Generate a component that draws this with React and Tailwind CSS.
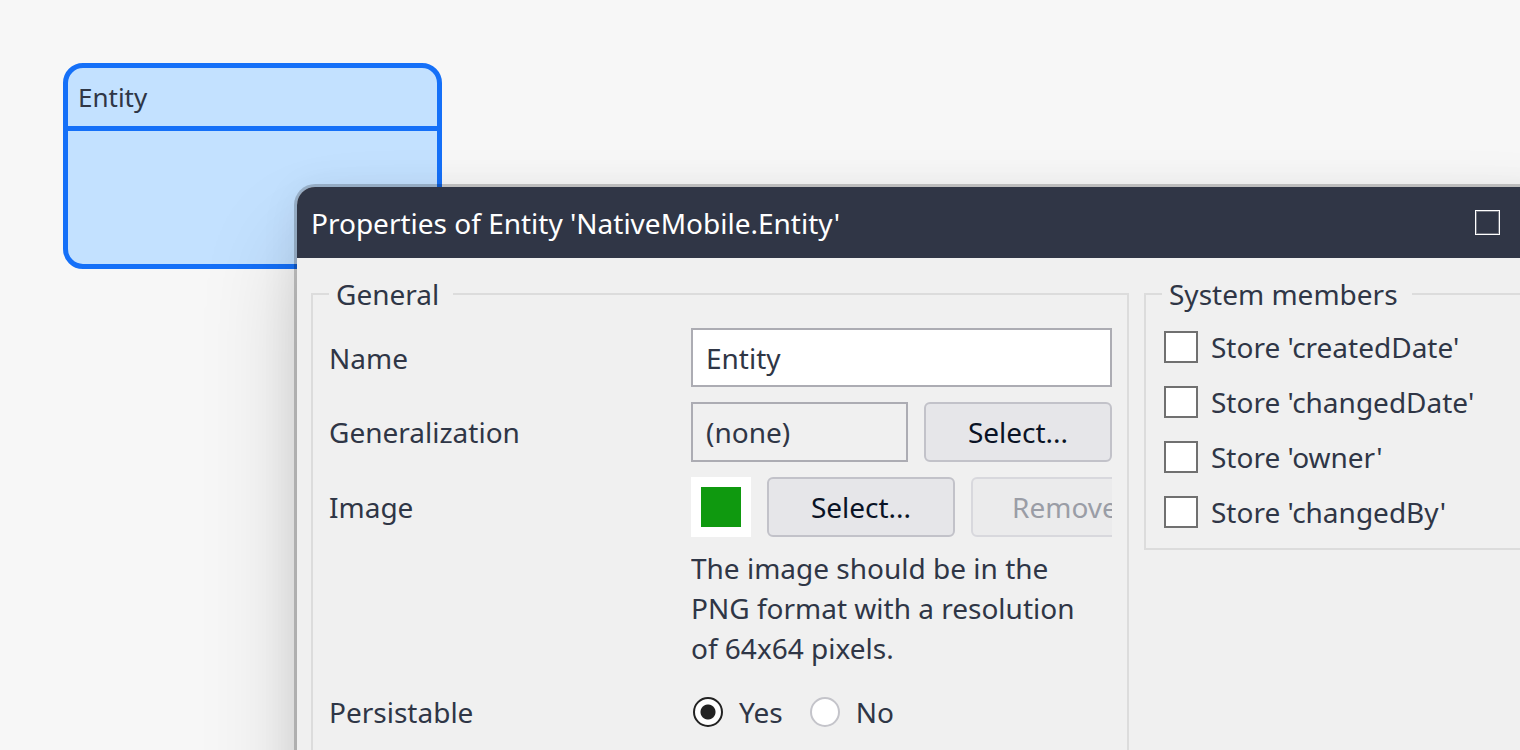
import { useState } from "react";

const buttonClass =
  "h-full w-[188px] shrink-0 rounded-[6px] border-2 border-[#c2c2c9] bg-[#e6e6e9] text-center text-[#0a1325] disabled:border-[#d8d8dd] disabled:bg-[#ebebec] disabled:text-[#9a9da6]";

const fieldClass =
  "h-full w-full min-w-0 flex-1 border-2 border-[#acacb3] px-[13px] text-[#2f3646] outline-none";

function Group({ title, className, children }) {
  return (
    <fieldset className={`min-w-0 border-2 border-[#dcdcdc] pr-[15px] pl-4 ${className}`}>
      <legend className="pr-[14px] pl-[7px]">{title}</legend>
      {children}
    </fieldset>
  );
}

function Row({ label, htmlFor, className, children }) {
  return (
    <div className={`grid grid-cols-[362px_1fr] ${className}`}>
      {htmlFor ? (
        <label htmlFor={htmlFor} className="flex h-full items-center">
          {label}
        </label>
      ) : (
        <span className="flex h-full items-center">{label}</span>
      )}
      <div className="flex min-w-0 items-center overflow-hidden">{children}</div>
    </div>
  );
}

function Radio({ label, checked, onChange }) {
  return (
    <label className="flex items-center gap-4">
      <input
        type="radio"
        name="persistable"
        checked={checked}
        onChange={onChange}
        className="size-[30px] appearance-none rounded-full border-2 border-[#c4c4ca] bg-white checked:border-[#222222] checked:bg-[radial-gradient(circle,#222222_7px,#ffffff_8px)]"
      />
      {label}
    </label>
  );
}

const members = ["createdDate", "changedDate", "owner", "changedBy"];

export default function App() {
  const [name, setName] = useState("Entity");
  const [persistable, setPersistable] = useState(true);

  return (
    <main className="relative h-screen overflow-hidden bg-[#f7f7f7] font-['Noto_Sans','Open_Sans',sans-serif] text-[28px] leading-10 text-[#2f3646]">
      <section className="absolute top-[63px] left-[63px] h-[206px] w-[379px] rounded-[20px] border-5 border-[#1570f8] bg-[#c3e1ff]">
        <h2 className="flex h-[63px] items-center border-b-5 border-[#1570f8] px-[10px] text-[26px]">
          Entity
        </h2>
      </section>

      <section
        role="dialog"
        aria-labelledby="dialog-title"
        className="absolute top-[187px] -right-[47px] -bottom-20 left-[297px] rounded-[18px] bg-[#f0f0f0] shadow-[0_0_0_3px_rgba(0,0,0,0.2),0_4px_40px_rgba(0,0,0,0.07),0_56px_96px_rgba(0,0,0,0.17)]"
      >
        <header className="flex h-[71px] items-center gap-[27px] rounded-t-[18px] bg-[#303646] px-[14px] text-white">
          <h1 id="dialog-title" className="flex-1">
            Properties of Entity 'NativeMobile.Entity'
          </h1>
          <button type="button" aria-label="Maximize">
            <svg viewBox="0 0 25 25" className="size-[25px]" fill="none" stroke="currentColor">
              <rect x="0.5" y="0.5" width="24" height="24" />
              <rect x="1.5" y="1.5" width="22" height="22" opacity="0.3" />
            </svg>
          </button>
          <button type="button" aria-label="Close">
            <svg viewBox="0 0 26 26" className="size-[26px]" fill="none" stroke="currentColor">
              <path d="M1 1 25 25M25 1 1 25" />
            </svg>
          </button>
        </header>

        <div className="grid grid-cols-[2fr_1fr] items-start gap-[15px] px-[14px] pt-4">
          <Group title="General" className="pt-[14px] pb-10">
            <Row label="Name" htmlFor="name" className="mb-[15px] h-[59px]">
              <input
                id="name"
                value={name}
                onChange={(e) => setName(e.target.value)}
                className={`${fieldClass} bg-white`}
              />
            </Row>
            <Row label="Generalization" htmlFor="generalization" className="mb-[15px] h-[60px]">
              <div className="flex h-full w-full gap-4">
                <input
                  id="generalization"
                  readOnly
                  value="(none)"
                  className={`${fieldClass} bg-transparent`}
                />
                <button type="button" className={buttonClass}>Select...</button>
              </div>
            </Row>
            <Row label="Image" className="mb-[11px] h-[60px]">
              <div className="flex h-full gap-4">
                <div className="h-full w-[60px] shrink-0 bg-white p-[10px]">
                  <div className="h-full bg-[#0f990f]" />
                </div>
                <button type="button" className={buttonClass}>Select...</button>
                <button type="button" disabled className={buttonClass}>Remove</button>
              </div>
            </Row>
            <Row className="mb-6">
              <p className="pr-4">The image should be in the PNG format with a resolution of 64x64 pixels.</p>
            </Row>
            <Row label="Persistable" className="h-10">
              <div className="flex gap-[27px] pl-0.5">
                <Radio label="Yes" checked={persistable} onChange={() => setPersistable(true)} />
                <Radio label="No" checked={!persistable} onChange={() => setPersistable(false)} />
              </div>
            </Row>
          </Group>

          <Group title="System members" className="pt-[17px] pb-5">
            <div className="flex flex-col gap-[23px]">
              {members.map((member) => (
                <label key={member} className="flex h-8 items-center gap-[13px] pl-0.5">
                  <input
                    type="checkbox"
                    className="h-8 w-[34px] shrink-0 appearance-none border-2 border-[#707070] bg-white checked:bg-[#1570f8]"
                  />
                  Store '{member}'
                </label>
              ))}
            </div>
          </Group>
        </div>
      </section>
    </main>
  );
}
